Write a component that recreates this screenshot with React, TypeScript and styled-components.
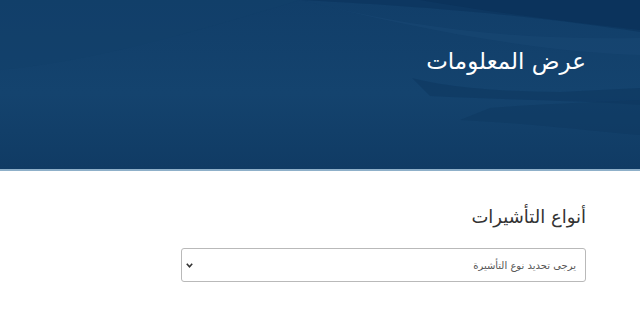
import React from "react";
import styled, { createGlobalStyle } from "styled-components";

const GlobalStyle = createGlobalStyle`
  html, body {
    margin: 0;
    padding: 0;
    background: #ffffff;
  }
  body {
    font-family: "DejaVu Sans", "Noto Sans", sans-serif;
  }
`;

const Page = styled.div`
  direction: rtl;
  width: 640px;
  height: 320px;
  overflow: hidden;
  background: #ffffff;
`;

const Banner = styled.header`
  position: relative;
  height: 169px;
  background: linear-gradient(180deg, #113e69 0%, #14436e 55%, #103b64 100%);
  border-bottom: 2px solid #8fb0c9;
  overflow: hidden;
`;

const BannerArt = styled.svg`
  position: absolute;
  inset: 0;
  width: 100%;
  height: 100%;
`;

const BannerInner = styled.div`
  position: relative;
  padding: 44px 54px 0 0;
`;

const Title = styled.h1`
  margin: 0;
  color: #ffffff;
  font-family: "DejaVu Sans", sans-serif;
  font-size: 23px;
  font-weight: normal;
  line-height: 34px;
`;

const Content = styled.main`
  padding: 32px 54px 0 0;
  display: flex;
  flex-direction: column;
  align-items: flex-start;
`;

const SectionTitle = styled.h2`
  margin: 0 0 17px;
  color: #333333;
  font-family: "DejaVu Sans", sans-serif;
  font-size: 18px;
  font-weight: normal;
  line-height: 28px;
`;

const Select = styled.div`
  box-sizing: border-box;
  width: 405px;
  height: 34px;
  border: 1px solid #b9b9b9;
  border-radius: 3px;
  display: flex;
  align-items: center;
  justify-content: space-between;
  padding: 0 9px 0 4px;
  background: #ffffff;
`;

const Placeholder = styled.span`
  color: #555555;
  font-family: "DejaVu Sans", sans-serif;
  font-size: 10px;
`;

const Chevron = () => (
  <svg width="7" height="5" viewBox="0 0 7 5">
    <path d="M0.8 0.8 L3.5 3.8 L6.2 0.8" fill="none" stroke="#333" strokeWidth="1.6" />
  </svg>
);

export default function App() {
  return (
    <>
      <GlobalStyle />
      <Page>
        <Banner>
          <BannerArt viewBox="0 0 640 169" preserveAspectRatio="none">
            <path d="M300 0 L640 0 L640 32 C560 20 460 8 300 0 Z" fill="#0b355e" opacity="0.7" />
            <path d="M420 0 C500 14 590 24 640 30 L640 0 Z" fill="#0a3158" opacity="0.6" />
            <path d="M300 0 C420 30 520 40 640 38 L640 55 C540 52 420 30 300 0 Z" fill="#1a4a76" opacity="0.45" />
            <path d="M412 78 C440 86 500 92 560 92 L640 88 L640 105 C580 100 500 100 430 96 Z" fill="#0c375f" opacity="0.55" />
            <path d="M490 108 C540 104 600 102 640 100 L640 135 C600 132 540 124 460 120 Z" fill="#0d3860" opacity="0.5" />
            <path d="M0 0 L300 0 C200 30 100 60 0 70 Z" fill="#123f69" opacity="0.5" />
          </BannerArt>
          <BannerInner>
            <Title>عرض المعلومات</Title>
          </BannerInner>
        </Banner>
        <Content>
          <SectionTitle>أنواع التأشيرات</SectionTitle>
          <Select>
            <Placeholder>يرجى تحديد نوع التأشيرة</Placeholder>
            <Chevron />
          </Select>
        </Content>
      </Page>
    </>
  );
}
